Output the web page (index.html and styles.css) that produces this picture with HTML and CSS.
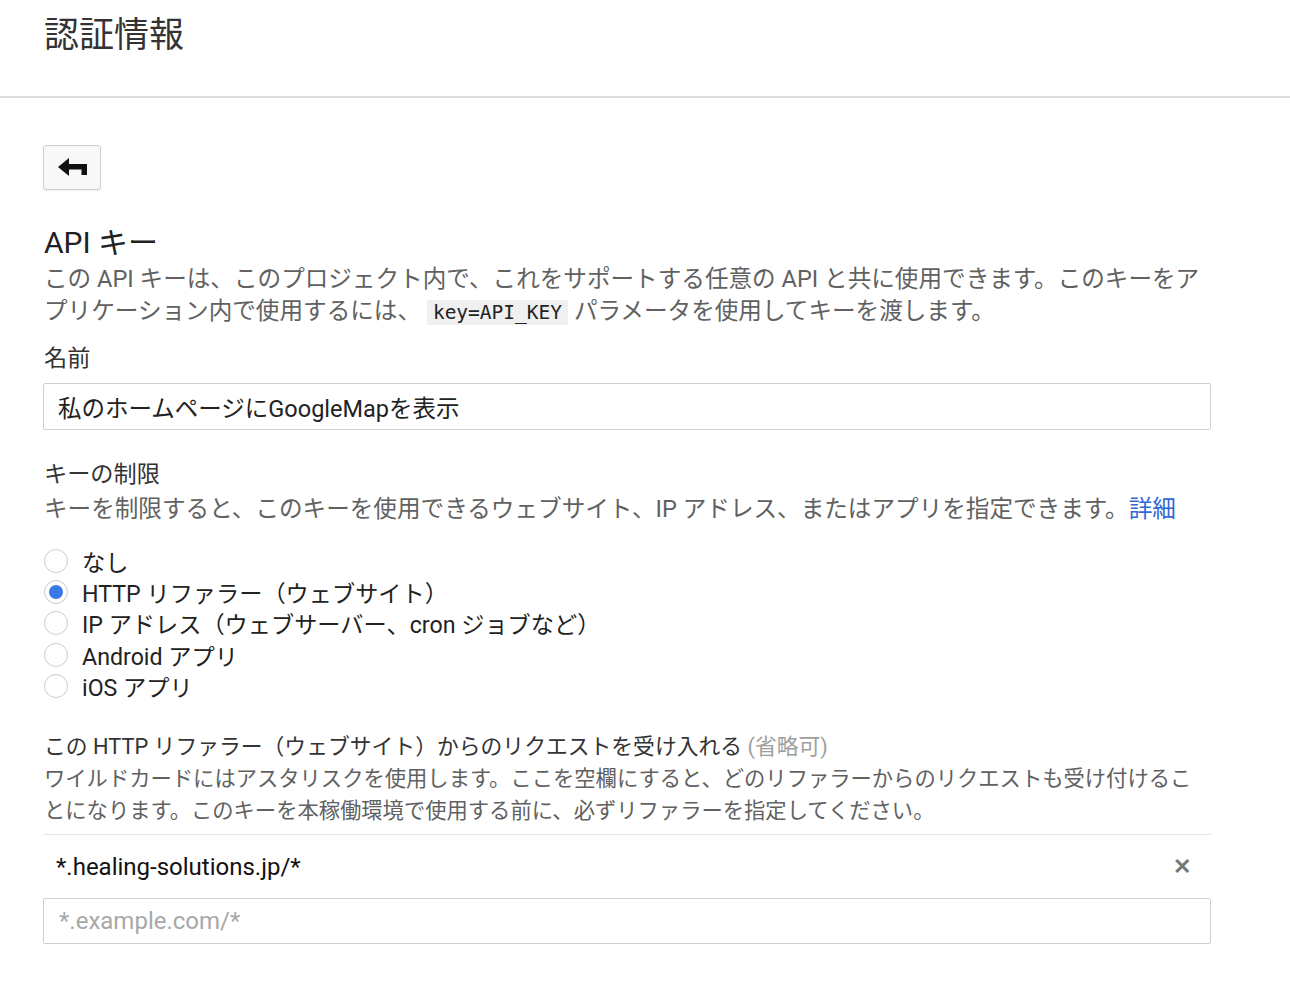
FILE: index.html
```html
<!DOCTYPE html>
<html lang="ja">
<head>
    <meta charset="UTF-8">
    <title>認証情報 - API キー</title>
    <link rel="stylesheet" href="styles.css">
</head>
<body>
    <header class="page-header">
        <h1>認証情報</h1>
    </header>

    <main class="content">
        <button class="back-btn" type="button" aria-label="戻る">
            <svg width="30" height="19" viewBox="0 0 30 19">
                <path d="M0 9 L11 0 L11 18 Z" fill="#111"/>
                <path d="M9 6 H29 V17 H23.5 V11.5 H9 Z" fill="#111"/>
            </svg>
        </button>

        <h2 class="section-title">API キー</h2>
        <p class="desc">この API キーは、このプロジェクト内で、これをサポートする任意の API と共に使用できます。このキーをアプリケーション内で使用するには、 <code>key=API_KEY</code> パラメータを使用してキーを渡します。</p>

        <label class="field-label name-label" for="keyName">名前</label>
        <input class="text-input" id="keyName" type="text" value="私のホームページにGoogleMapを表示">

        <div class="field-label restrict-title">キーの制限</div>
        <p class="desc restrict-desc">キーを制限すると、このキーを使用できるウェブサイト、IP アドレス、またはアプリを指定できます。<a href="#">詳細</a></p>

        <ul class="radio-list">
            <li><span class="radio"></span>なし</li>
            <li><span class="radio checked"></span>HTTP リファラー（ウェブサイト）</li>
            <li><span class="radio"></span>IP アドレス（ウェブサーバー、cron ジョブなど）</li>
            <li><span class="radio"></span>Android アプリ</li>
            <li><span class="radio"></span>iOS アプリ</li>
        </ul>

        <div class="referrer-block">
            <div class="referrer-title">この HTTP リファラー（ウェブサイト）からのリクエストを受け入れる <span class="optional">(省略可)</span></div>
            <p class="referrer-desc">ワイルドカードにはアスタリスクを使用します。ここを空欄にすると、どのリファラーからのリクエストも受け付けることになります。このキーを本稼働環境で使用する前に、必ずリファラーを指定してください。</p>
        </div>

        <div class="referrer-row">
            <span class="referrer-value">*.healing-solutions.jp/*</span>
            <span class="remove">✕</span>
        </div>
        <input class="text-input referrer-input" type="text" placeholder="*.example.com/*">
    </main>
</body>
</html>
```

FILE: styles.css
```css
body {
    margin: 0;
    font-family: Roboto, "Noto Sans CJK JP", sans-serif;
    font-size: 23.2px;
    color: #222;
    background: #fff;
}
.page-header {
    height: 98px;
    border-bottom: 2px solid #dcdcdc;
    box-sizing: border-box;
    padding: 16px 44px 0;
}
h1 {
    margin: 0;
    font-size: 35px;
    line-height: 40px;
    font-weight: 400;
    color: #333;
}
.content {
    padding: 0 79px 60px 43px;
    width: 1168px;
}
.back-btn {
    display: flex;
    align-items: center;
    justify-content: center;
    margin-top: 47px;
    width: 58px;
    height: 45px;
    padding: 0 0 0 1px;
    background: #f8f8f8;
    border: 1.5px solid #cfcfcf;
    border-radius: 3px;
    box-shadow: 0 1px 1px rgba(0,0,0,0.06);
}
.section-title {
    margin: 35px 0 0 1px;
    font-size: 30px;
    line-height: 36px;
    font-weight: 400;
    color: #212121;
}
.desc {
    margin: 2px 0 0 1px;
    font-size: 23.6px;
    line-height: 32px;
    color: #616161;
}
code {
    display: inline-block;
    font-family: "DejaVu Sans Mono", monospace;
    font-size: 19.5px;
    line-height: 24px;
    color: #222;
    background: #f0f0f0;
    padding: 1px 6px 0;
}
.field-label {
    display: block;
    margin: 16px 0 0 1px;
    line-height: 32px;
    color: #333;
}
.name-label {
    margin-top: 15px;
}
.text-input {
    display: block;
    width: 100%;
    height: 47px;
    margin-top: 9px;
    padding: 0 14px;
    box-sizing: border-box;
    border: 1.5px solid #cfcfcf;
    border-radius: 2px;
    font-family: Roboto, "Noto Sans CJK JP", sans-serif;
    font-size: 23.5px;
    color: #222;
    background: #fff;
}
.text-input::placeholder {
    color: #a8a8a8;
}
.restrict-title {
    margin-top: 28px;
}
.restrict-desc {
    margin-top: 3px;
}
.desc a {
    color: #3367d6;
    text-decoration: none;
}
.radio-list {
    list-style: none;
    margin: 20px 0 0 1px;
    padding: 0;
}
.radio-list li {
    display: flex;
    align-items: center;
    height: 31.3px;
    color: #222;
}
.radio {
    width: 24px;
    height: 24px;
    margin-right: 14px;
    box-sizing: border-box;
    border: 1.5px solid #cccccc;
    border-radius: 50%;
    display: flex;
    align-items: center;
    justify-content: center;
}
.radio.checked::after {
    content: "";
    width: 14px;
    height: 14px;
    border-radius: 50%;
    background: #3b78e7;
}
.referrer-block {
    margin: 30px 0 0 1px;
    font-size: 21.3px;
}
.referrer-title {
    font-size: 21.8px;
    line-height: 32px;
    color: #333;
}
.optional {
    color: #9e9e9e;
}
.referrer-desc {
    margin: 0;
    line-height: 31.5px;
    color: #616161;
}
.referrer-row {
    display: flex;
    align-items: center;
    justify-content: space-between;
    height: 63px;
    margin-top: 8px;
    padding: 0 20px 0 13px;
    border-top: 1.5px solid #e6e6e6;
}
.referrer-value {
    font-size: 24px;
    color: #111;
}
.remove {
    font-size: 22px;
    font-weight: 700;
    color: #777;
}
.referrer-input {
    margin-top: 0;
    height: 46px;
    padding-left: 15px;
    font-size: 24px;
}
```
